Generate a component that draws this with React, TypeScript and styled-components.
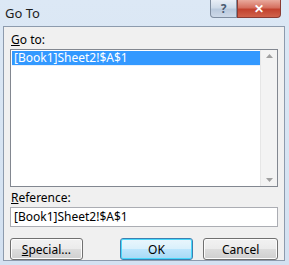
import React from "react";
import styled, { createGlobalStyle } from "styled-components";

const Global = createGlobalStyle`
  html, body { margin: 0; padding: 0; background: #dbe6f3; }
  body { font-family: "Noto Sans", "Open Sans", sans-serif; }
`;

const Window = styled.div`
  width: 289px;
  height: 265px;
  box-sizing: border-box;
  background: linear-gradient(#dce8f5, #d3e1f1);
  display: flex;
  flex-direction: column;
  padding: 0 4px 4px 3px;
`;

const TitleBar = styled.div`
  height: 26px;
  display: flex;
  align-items: flex-start;
  justify-content: space-between;
`;

const Title = styled.div`
  font-size: 13px;
  color: #1e1e1e;
  padding: 4px 0 0 2px;
`;

const Controls = styled.div`
  display: flex;
  margin-right: 4px;
`;

const CtrlButton = styled.div<{ $close?: boolean }>`
  width: ${(p) => (p.$close ? 44 : 27)}px;
  height: 18px;
  box-sizing: border-box;
  border: 1px solid ${(p) => (p.$close ? "#8a3b33" : "#7f8da0")};
  border-top: none;
  border-radius: ${(p) => (p.$close ? "0 0 4px 0" : "0 0 0 4px")};
  background: ${(p) =>
    p.$close
      ? "linear-gradient(#e9a99c, #d5705f 45%, #c2422e 55%, #d0624b)"
      : "linear-gradient(#e8eef6, #cfdbe9 45%, #b9c9dd 55%, #cdd9e8)"};
  display: flex;
  align-items: center;
  justify-content: center;
  color: ${(p) => (p.$close ? "#fff" : "#4a5b72")};
  font-size: 12px;
  font-weight: bold;
`;

const Client = styled.div`
  flex: 1;
  background: #f0f0f0;
  border: 1px solid #8d9bad;
  display: flex;
  flex-direction: column;
  padding: 5px 6px 0 6px;
  font-size: 12px;
  color: #000;
`;

const Label = styled.div<{ $mt?: number }>`
  height: 15px;
  line-height: 15px;
  padding-left: 1px;
  margin-top: ${(p) => p.$mt ?? 0}px;
  margin-bottom: 2px;
`;

const ListBox = styled.div`
  height: 136px;
  background: #fff;
  border: 1px solid #828790;
  display: flex;
`;

const ListItems = styled.div`
  flex: 1;
  padding: 1px 0 0 1px;
`;

const Item = styled.div<{ $selected?: boolean }>`
  height: 14px;
  line-height: 14px;
  padding-left: 2px;
  background: ${(p) => (p.$selected ? "#3399ff" : "transparent")};
  color: ${(p) => (p.$selected ? "#fff" : "#000")};
  border-bottom: 1px solid ${(p) => (p.$selected ? "#e8f1fc" : "transparent")};
`;

const ScrollBar = styled.div`
  width: 17px;
  background: #f3f3f3;
  border-left: 1px solid #e6e6e6;
  display: flex;
  flex-direction: column;
  justify-content: space-between;
  align-items: center;
  padding: 4px 0;
  box-sizing: border-box;
`;

const TextBox = styled.div`
  height: 20px;
  box-sizing: border-box;
  background: #fff;
  border: 1px solid #abadb3;
  line-height: 18px;
  padding-left: 3px;
`;

const ButtonRow = styled.div`
  display: flex;
  margin-top: 11px;
`;

const Button = styled.div<{ $default?: boolean; $w: number; $ml: number }>`
  width: ${(p) => p.$w}px;
  margin-left: ${(p) => p.$ml}px;
  height: 22px;
  box-sizing: border-box;
  border: 1px solid ${(p) => (p.$default ? "#3c7fb1" : "#707070")};
  border-radius: 3px;
  background: ${(p) =>
    p.$default
      ? "linear-gradient(#eaf6fd, #d9f0fc 50%, #bee6fd 50%, #a7d9f5)"
      : "linear-gradient(#f2f2f2, #ebebeb 50%, #dddddd 50%, #cfcfcf)"};
  box-shadow: inset 0 0 0 1px ${(p) => (p.$default ? "#48d8fb" : "#fcfcfc")};
  display: flex;
  align-items: center;
  justify-content: center;
`;

const U = styled.span`
  text-decoration: underline;
`;

const Arrow = ({ up }: { up?: boolean }) => (
  <svg width="7" height="4" viewBox="0 0 7 4">
    <path d={up ? "M0 4 L3.5 0 L7 4 Z" : "M0 0 L3.5 4 L7 0 Z"} fill="#a0a0a0" />
  </svg>
);

export default function App() {
  return (
    <>
      <Global />
      <Window>
        <TitleBar>
          <Title>Go To</Title>
          <Controls>
            <CtrlButton>?</CtrlButton>
            <CtrlButton $close>✕</CtrlButton>
          </Controls>
        </TitleBar>
        <Client>
          <Label>
            <U>G</U>o to:
          </Label>
          <ListBox>
            <ListItems>
              <Item $selected>[Book1]Sheet2!$A$1</Item>
            </ListItems>
            <ScrollBar>
              <Arrow up />
              <Arrow />
            </ScrollBar>
          </ListBox>
          <Label $mt={3}>
            <U>R</U>eference:
          </Label>
          <TextBox>[Book1]Sheet2!$A$1</TextBox>
          <ButtonRow>
            <Button $w={73} $ml={0}>
              <span>
                <U>S</U>pecial...
              </span>
            </Button>
            <Button $default $w={74} $ml={37}>
              OK
            </Button>
            <Button $w={75} $ml={10}>
              Cancel
            </Button>
          </ButtonRow>
        </Client>
      </Window>
    </>
  );
}
